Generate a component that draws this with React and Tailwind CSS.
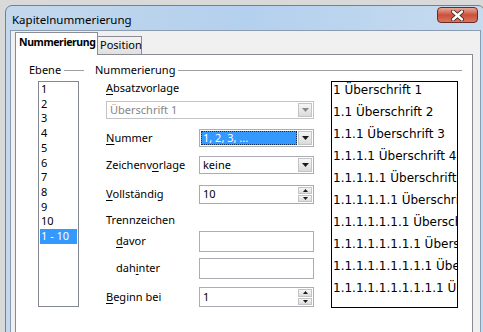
import React from 'react';

// Kapitelnummerierung dialog (Windows 7 look)

const levels = ['1', '2', '3', '4', '5', '6', '7', '8', '9', '10', '1 - 10'];

const preview = [
  '1 Überschrift 1',
  '1.1 Überschrift 2',
  '1.1.1 Überschrift 3',
  '1.1.1.1 Überschrift 4',
  '1.1.1.1.1 Überschrift 5',
  '1.1.1.1.1.1 Überschrift 6',
  '1.1.1.1.1.1.1 Überschrift 7',
  '1.1.1.1.1.1.1.1 Überschrift 8',
  '1.1.1.1.1.1.1.1.1 Überschrift 9',
  '1.1.1.1.1.1.1.1.1.1 Überschrift 10',
];

function Caret({ up = false, disabled = false, small = false }) {
  const w = small ? 5 : 7;
  const h = small ? 3 : 4;
  const pts = up ? `0,${h} ${w / 2},0 ${w},${h}` : `0,0 ${w},0 ${w / 2},${h}`;
  return (
    <svg width={w} height={h} viewBox={`0 0 ${w} ${h}`}>
      <polygon points={pts} fill={disabled ? '#8a8a8a' : '#1a1a1a'} />
    </svg>
  );
}

function DropButton({ disabled }) {
  return (
    <div className="my-px mr-px flex w-[14px] items-center justify-center border border-[#c4c4c4] bg-gradient-to-b from-[#f6f6f6] to-[#dadada]">
      <Caret disabled={disabled} />
    </div>
  );
}

function Dropdown({ value, disabled = false, selected = false }) {
  return (
    <div className={`flex h-full flex-1 border ${disabled ? 'border-[#c2c4c8]' : 'border-[#abadb3]'} bg-white`}>
      {selected ? (
        <div className="m-px flex flex-1 items-center border border-dotted border-[#0d2f5a] bg-[#3399ff] pl-px text-white">
          {value}
        </div>
      ) : (
        <div className={`flex flex-1 items-center pl-[3px] ${disabled ? 'text-[#858585]' : 'text-black'}`}>{value}</div>
      )}
      <DropButton disabled={disabled} />
    </div>
  );
}

function Spin({ value, focused = false }) {
  return (
    <div className={`flex h-full flex-1 border ${focused ? 'border-[#7eb4ea]' : 'border-[#abadb3]'} bg-white`}>
      <div className="flex flex-1 items-center pl-[3px] text-black">{value}</div>
      <div className="my-px mr-px flex w-[14px] flex-col gap-px">
        <div className="flex flex-1 items-center justify-center border border-[#c4c4c4] bg-gradient-to-b from-[#f6f6f6] to-[#dcdcdc]">
          <Caret up small />
        </div>
        <div className="flex flex-1 items-center justify-center border border-[#c4c4c4] bg-gradient-to-b from-[#f6f6f6] to-[#dcdcdc]">
          <Caret small />
        </div>
      </div>
    </div>
  );
}

function Label({ pre = '', u, post = '', indent = false }) {
  return (
    <div className={`flex w-[93px] shrink-0 items-center ${indent ? 'pl-[10px]' : ''}`}>
      {pre}
      <span className="underline underline-offset-[2px]">{u}</span>
      {post}
    </div>
  );
}

export default function App() {
  return (
    <div className="h-[332px] w-[483px] overflow-hidden bg-[#d9d9d9] pl-[5px] pt-[5px] font-['Noto_Sans',sans-serif] text-[11px] text-black">
      {/* window frame */}
      <div className="flex h-[340px] w-[480px] flex-col rounded-t-[7px] border border-[#6f8196] bg-gradient-to-r from-[#c4d8ec] via-[#b3d0ee] to-[#c7dbef]">
        {/* title bar */}
        <div className="flex h-[24px] shrink-0 items-start">
          <div className="flex-1 pl-[6px] pt-[7px] text-[11.5px] leading-[14px] text-black">Kapitelnummerierung</div>
          <div className="mr-[6px] mt-px flex h-[16px] w-[41px] items-center justify-center rounded-[4px] border border-[#6b2a22] bg-gradient-to-b from-[#e8a898] via-[#c9503c] to-[#d7765c]">
            <svg width="13" height="11" viewBox="0 0 13 11">
              <path d="M2 1.5 L11 9.5 M11 1.5 L2 9.5" stroke="#3a1a14" strokeWidth="4" strokeLinecap="round" />
              <path d="M2 1.5 L11 9.5 M11 1.5 L2 9.5" stroke="#ffffff" strokeWidth="2.4" strokeLinecap="round" />
            </svg>
          </div>
        </div>

        {/* client area */}
        <div className="ml-[4px] mr-[3px] flex-1 border border-[#8b9bb0] bg-[#f0f0f0] pl-[4px] pt-px">
          {/* tabs */}
          <div className="relative z-10 flex h-[23px] items-end">
            <div className="flex h-[23px] w-[83px] items-center border border-b-0 border-[#898c95] bg-white pb-[3px] pl-[3px] text-[10.5px] font-bold tracking-[-0.4px]">
              Nummerierung
            </div>
            <div className="mb-px flex h-[18px] w-[44px] items-center border border-b-0 border-l-0 border-[#898c95] bg-gradient-to-b from-[#f3f3f3] to-[#e0e0e0] pl-[2px]">
              Position
            </div>
          </div>

          {/* tab page */}
          <div className="-mt-px h-[290px] w-[458px] border border-[#898c95] bg-white pl-[13px] pt-[7px]">
            <div className="flex">
              {/* Ebene */}
              <div className="w-[66px] shrink-0">
                <div className="flex h-[16px] items-center">
                  <span>Ebene</span>
                  <div className="ml-[3px] mr-[11px] h-px flex-1 bg-[#a0a0a0]" />
                </div>
                <div className="ml-[9px] mt-[3px] h-[226px] w-[41px] border border-[#828790] bg-white">
                  {levels.map((l, i) => (
                    <div
                      key={l}
                      className={`mx-px flex h-[14.7px] items-center pl-px ${i === levels.length - 1 ? 'bg-[#3399ff] text-white' : ''}`}
                    >
                      {l}
                    </div>
                  ))}
                </div>
              </div>

              {/* Nummerierung */}
              <div className="w-[367px] shrink-0">
                <div className="flex h-[16px] items-center">
                  <span>Nummerierung</span>
                  <div className="ml-[3px] h-px flex-1 bg-[#a0a0a0]" />
                </div>
                <div className="mt-[3px] flex">
                  <div className="flex w-[219px] shrink-0 flex-col pl-[11px]">
                    <div className="flex h-[14px] items-center">
                      <span className="underline underline-offset-[2px]">A</span>bsatzvorlage
                    </div>
                    <div className="mt-[6px] flex h-[18px]">
                      <Dropdown value="Überschrift 1" disabled />
                    </div>
                    <div className="mt-[10px] flex h-[18px]">
                      <Label u="N" post="ummer" />
                      <Dropdown value="1, 2, 3, ..." selected />
                    </div>
                    <div className="mt-[9px] flex h-[18px]">
                      <Label pre="Zeichenv" u="o" post="rlage" />
                      <Dropdown value="keine" />
                    </div>
                    <div className="mt-[11px] flex h-[19px]">
                      <Label u="V" post="ollständig" />
                      <Spin value="10" focused />
                    </div>
                    <div className="mt-[8px] flex h-[16px] items-center">Trennzeichen</div>
                    <div className="mt-[3px] flex h-[21px]">
                      <Label u="d" post="avor" indent />
                      <div className="flex-1 border border-[#abadb3] bg-white" />
                    </div>
                    <div className="mt-[6px] flex h-[21px]">
                      <Label pre="dah" u="i" post="nter" indent />
                      <div className="flex-1 border border-[#abadb3] bg-white" />
                    </div>
                    <div className="mt-[8px] flex h-[20px]">
                      <Label u="B" post="eginn bei" />
                      <Spin value="1" />
                    </div>
                  </div>

                  {/* preview */}
                  <div className="ml-[17px] h-[227px] w-[127px] shrink-0 overflow-hidden border border-black bg-white pl-px">
                    <div className="-mt-[3px] whitespace-nowrap font-['DejaVu_Sans',sans-serif] text-[12px] leading-[22px] text-black">
                      {preview.map((p) => (
                        <div key={p}>{p}</div>
                      ))}
                    </div>
                  </div>
                </div>
              </div>
            </div>
          </div>
        </div>
      </div>
    </div>
  );
}
